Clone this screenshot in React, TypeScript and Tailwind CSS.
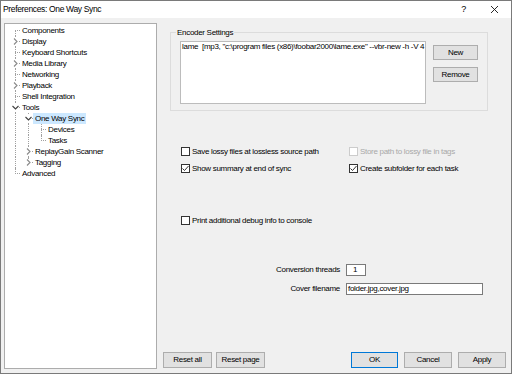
import React from "react";

type Row = {
  label: string;
  level: number;
  anc: boolean[];
  first?: boolean;
  last?: boolean;
  exp?: "open" | "closed";
  selected?: boolean;
};

const rows: Row[] = [
  { label: "Components", level: 0, anc: [], first: true },
  { label: "Display", level: 0, anc: [], exp: "closed" },
  { label: "Keyboard Shortcuts", level: 0, anc: [] },
  { label: "Media Library", level: 0, anc: [], exp: "closed" },
  { label: "Networking", level: 0, anc: [] },
  { label: "Playback", level: 0, anc: [], exp: "closed" },
  { label: "Shell Integration", level: 0, anc: [] },
  { label: "Tools", level: 0, anc: [], exp: "open" },
  { label: "One Way Sync", level: 1, anc: [true], exp: "open", selected: true },
  { label: "Devices", level: 2, anc: [true, true] },
  { label: "Tasks", level: 2, anc: [true, true], last: true },
  { label: "ReplayGain Scanner", level: 1, anc: [true], exp: "closed" },
  { label: "Tagging", level: 1, anc: [true], exp: "closed", last: true },
  { label: "Advanced", level: 0, anc: [], last: true },
];

function Chevron({ open }: { open: boolean }) {
  return (
    <svg
      width="7"
      height="7"
      viewBox="0 0 7 7"
      className="absolute left-[3px] top-[2px] bg-white"
    >
      {open ? (
        <polyline points="0.5,2 3.5,5 6.5,2" fill="none" stroke="#404040" strokeWidth="1.1" />
      ) : (
        <polyline points="2,0.5 5,3.5 2,6.5" fill="none" stroke="#8a8a8a" strokeWidth="1.1" />
      )}
    </svg>
  );
}

function TreeRow({ r }: { r: Row }) {
  return (
    <div className="flex h-[11px]">
      {r.anc.map((c, i) => (
        <div key={i} className="relative h-full w-[13px]">
          {c && (
            <div className="absolute left-[6px] top-0 h-full border-l border-dotted border-[#a0a0a0]" />
          )}
        </div>
      ))}
      <div className="relative h-full w-[11px]">
        <div
          className={
            r.first
              ? "absolute left-[6px] top-[5px] h-[6px] border-l border-dotted border-[#a0a0a0]"
              : r.last
              ? "absolute left-[6px] top-0 h-[6px] border-l border-dotted border-[#a0a0a0]"
              : "absolute left-[6px] top-0 h-full border-l border-dotted border-[#a0a0a0]"
          }
        />
        <div className="absolute left-[6px] top-[5px] w-[5px] border-t border-dotted border-[#a0a0a0]" />
        {r.exp && <Chevron open={r.exp === "open"} />}
      </div>
      <div
        className={
          "h-full px-[2px] leading-[11px] whitespace-nowrap " +
          (r.selected ? "bg-[#cce8ff]" : "")
        }
      >
        {r.label}
      </div>
    </div>
  );
}

function Check({
  checked,
  disabled,
  label,
}: {
  checked?: boolean;
  disabled?: boolean;
  label: string;
}) {
  return (
    <div className="flex h-[11px] items-center gap-[2px]">
      <div
        className={
          "flex h-[9px] w-[9px] items-center justify-center border bg-white " +
          (disabled ? "border-[#cccccc]" : "border-[#333333]")
        }
      >
        {checked && (
          <svg width="7" height="7" viewBox="0 0 7 7">
            <polyline points="0.5,3.5 2.5,5.5 6.5,1" fill="none" stroke="#333333" strokeWidth="1" />
          </svg>
        )}
      </div>
      <span className={"whitespace-nowrap leading-[11px] " + (disabled ? "text-[#a8a8a8]" : "")}>
        {label}
      </span>
    </div>
  );
}

function Btn({ w, children, def }: { w: string; children: React.ReactNode; def?: boolean }) {
  return (
    <div
      className={
        "flex h-full items-center justify-center border bg-[#e1e1e1] " +
        w +
        " " +
        (def ? "border-[#0078d7]" : "border-[#adadad]")
      }
    >
      {children}
    </div>
  );
}

export default function App() {
  return (
    <div className="flex h-[374px] w-[512px] flex-col border border-[#7a7a7a] bg-[#f0f0f0] font-['Liberation_Sans',Arial,sans-serif] text-[8px] tracking-[-0.3px] text-black">
      {/* title bar */}
      <div className="flex h-[17px] items-center bg-white pl-[2px]">
        <span className="text-[8.5px] tracking-[-0.35px]">Preferences: One Way Sync</span>
        <div className="flex-1" />
        <span className="mr-[25px] text-[9px]">?</span>
        <svg width="7" height="7" viewBox="0 0 7 7" className="mr-[13px]">
          <line x1="0" y1="0" x2="7" y2="7" stroke="#111" strokeWidth="0.9" />
          <line x1="7" y1="0" x2="0" y2="7" stroke="#111" strokeWidth="0.9" />
        </svg>
      </div>

      {/* body */}
      <div className="flex flex-1">
        <div className="pb-[4px] pl-[3px] pt-[5px]">
          <div className="h-full w-[153px] border border-[#acacac] bg-white pl-[4px] pt-[1px]">
            {rows.map((r) => (
              <TreeRow key={r.label} r={r} />
            ))}
          </div>
        </div>

        <div className="flex flex-1 flex-col pb-[5px] pr-[5px]">
          <fieldset className="ml-[13px] mt-[9px] w-[318px] border border-[#dcdcdc] pb-[6px] pl-[5px] pr-[9px] pt-0">
            <legend className="px-[1px] leading-[11px]">Encoder Settings</legend>
            <div className="ml-[4px] mt-[3px] flex">
              <div className="h-[63px] w-[246px] overflow-hidden whitespace-nowrap border border-[#bcbcbc] bg-white pl-[1px] leading-[10px]">
                lame&nbsp;&nbsp;[mp3, "c:\program files (x86)\foobar2000\lame.exe" --vbr-new -h -V 4
              </div>
              <div className="ml-[7px] mt-[4px] flex flex-col gap-[7px]">
                <div className="h-[15px]">
                  <Btn w="w-[45px]">New</Btn>
                </div>
                <div className="h-[15px]">
                  <Btn w="w-[45px]">Remove</Btn>
                </div>
              </div>
            </div>
          </fieldset>

          <div className="ml-[24px] mt-[35px] flex flex-col gap-[6px]">
            <div className="flex">
              <div className="w-[168px]">
                <Check label="Save lossy files at lossless source path" />
              </div>
              <Check disabled label="Store path to lossy file in tags" />
            </div>
            <div className="flex">
              <div className="w-[168px]">
                <Check checked label="Show summary at end of sync" />
              </div>
              <Check checked label="Create subfolder for each task" />
            </div>
          </div>

          <div className="ml-[24px] mt-[41px]">
            <Check label="Print additional debug info to console" />
          </div>

          <div className="mt-[38px] flex flex-col gap-[7px]">
            <div className="flex h-[12px] items-center">
              <div className="w-[183px] text-right">Conversion threads</div>
              <div className="ml-[6px] h-full w-[20px] border border-[#7a7a7a] bg-white pl-[6px] leading-[10px]">
                1
              </div>
            </div>
            <div className="flex h-[12px] items-center">
              <div className="w-[183px] text-right">Cover filename</div>
              <div className="ml-[6px] h-full w-[137px] border border-[#7a7a7a] bg-white pl-[1px] leading-[10px]">
                folder.jpg,cover.jpg
              </div>
            </div>
          </div>

          <div className="ml-[6px] mt-auto flex h-[16px]">
            <Btn w="w-[49px]">Reset all</Btn>
            <div className="ml-[4px] flex">
              <Btn w="w-[49px]">Reset page</Btn>
            </div>
            <div className="flex-1" />
            <Btn w="w-[47px]" def>
              OK
            </Btn>
            <div className="ml-[6px] flex">
              <Btn w="w-[48px]">Cancel</Btn>
            </div>
            <div className="ml-[6px] flex">
              <Btn w="w-[48px]">Apply</Btn>
            </div>
          </div>
        </div>
      </div>
    </div>
  );
}
